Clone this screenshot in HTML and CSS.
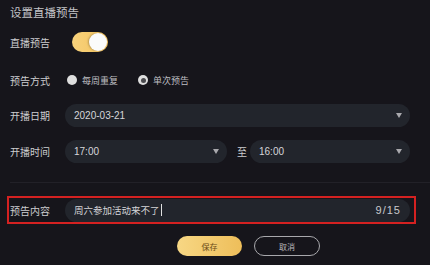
FILE: index.html
```html
<!DOCTYPE html>
<html lang="zh-CN">
<head>
    <meta charset="UTF-8">
    <title>设置直播预告</title>
    <link rel="stylesheet" href="styles.css">
</head>
<body>
    <div class="panel">
        <div class="title">设置直播预告</div>

        <div class="row row-toggle">
            <span class="label">直播预告</span>
            <div class="switch on"><span class="knob"></span></div>
        </div>

        <div class="row row-radio">
            <span class="label">预告方式</span>
            <span class="radio"></span>
            <span class="radio-text">每周重复</span>
            <span class="radio checked"></span>
            <span class="radio-text">单次预告</span>
        </div>

        <div class="row row-date">
            <span class="label">开播日期</span>
            <div class="select wide">
                <span>2020-03-21</span>
                <span class="arrow"></span>
            </div>
        </div>

        <div class="row row-time">
            <span class="label">开播时间</span>
            <div class="select short">
                <span>17:00</span>
                <span class="arrow"></span>
            </div>
            <span class="to">至</span>
            <div class="select wide">
                <span>16:00</span>
                <span class="arrow"></span>
            </div>
        </div>

        <div class="divider"></div>

        <div class="content-box">
            <span class="label">预告内容</span>
            <div class="input">
                <span class="input-text">周六参加活动来不了<span class="caret"></span></span>
                <span class="count">9/15</span>
            </div>
        </div>

        <div class="actions">
            <button class="btn btn-save">保存</button>
            <button class="btn btn-cancel">取消</button>
        </div>
    </div>
</body>
</html>
```

FILE: styles.css
```css
* {
    margin: 0;
    padding: 0;
    box-sizing: border-box;
}

body {
    font-family: "Noto Sans CJK SC", "Noto Sans", sans-serif;
    background: #16151b;
    color: #d2d2d4;
    width: 430px;
    height: 265px;
    overflow: hidden;
}

.title {
    height: 24px;
    line-height: 24px;
    padding-left: 10px;
    font-size: 11.5px;
    color: #c4c4c7;
}

.row {
    display: flex;
    align-items: center;
    padding: 0 20px 0 10px;
}

.label {
    width: 55px;
    flex-shrink: 0;
    font-size: 10px;
    color: #cdcdd0;
}

.row-toggle {
    margin-top: 8px;
    height: 20px;
}

.switch {
    width: 36px;
    height: 20px;
    margin-left: 7px;
    border-radius: 10px;
    background: linear-gradient(90deg, #f8d27b 0%, #f3c25f 100%);
    position: relative;
}

.switch .knob {
    position: absolute;
    top: 1px;
    right: 1px;
    width: 18px;
    height: 18px;
    border-radius: 50%;
    background: #fbfbfb;
    box-shadow: -1px 0 2px rgba(0, 0, 0, 0.25);
}

.row-radio {
    margin-top: 18px;
    height: 20px;
}

.radio {
    width: 10px;
    height: 10px;
    margin-left: 2px;
    border-radius: 50%;
    background: #dedede;
    position: relative;
}

.radio.checked {
    margin-left: 20px;
}

.radio.checked::after {
    content: "";
    position: absolute;
    left: 2.5px;
    top: 2.5px;
    width: 5px;
    height: 5px;
    border-radius: 50%;
    background: #4a4a4e;
}

.radio-text {
    margin-left: 5px;
    font-size: 9px;
    color: #bdbdc0;
}

.row-date {
    margin-top: 14px;
    height: 23px;
}

.row-time {
    margin-top: 13px;
    height: 23px;
}

.select {
    height: 23px;
    border-radius: 12px;
    background: #22252c;
    display: flex;
    align-items: center;
    justify-content: space-between;
    padding: 0 8px 0 9px;
    font-family: "Liberation Sans", sans-serif;
    font-size: 10px;
    color: #d6d6d9;
}

.select.wide {
    flex: 1;
}

.select.short {
    width: 162px;
}

.arrow {
    width: 0;
    height: 0;
    border-left: 3.5px solid transparent;
    border-right: 3.5px solid transparent;
    border-top: 5px solid #a9a9ad;
}

.to {
    margin: 0 3px 0 10px;
    font-size: 10px;
    color: #cdcdd0;
}

.divider {
    margin: 19px 0 0 10px;
    height: 1px;
    background: #222128;
}

.content-box {
    margin: 13px 0 0 7px;
    width: 409px;
    height: 28px;
    border: 2px solid #d42121;
    display: flex;
    align-items: center;
    padding: 0 4px 0 1px;
}

.input {
    flex: 1;
    height: 23px;
    border-radius: 12px;
    background: #22252c;
    display: flex;
    align-items: center;
    justify-content: space-between;
    padding: 0 9px;
}

.input-text {
    font-size: 9.5px;
    color: #d4d4d7;
    display: flex;
    align-items: center;
}

.caret {
    display: inline-block;
    width: 1px;
    height: 12px;
    margin-left: 1px;
    background: #e0e0e0;
}

.count {
    font-family: "Liberation Sans", sans-serif;
    font-size: 11px;
    letter-spacing: 1px;
    color: #c9c9cc;
}

.actions {
    display: flex;
    gap: 12px;
    margin-top: 12px;
    padding-left: 177px;
}

.btn {
    height: 20px;
    border-radius: 10px;
    font-family: "Noto Sans CJK SC", sans-serif;
    font-size: 8px;
    cursor: pointer;
}

.btn-save {
    width: 65px;
    border: none;
    background: linear-gradient(90deg, #f7d784 0%, #eebe5a 100%);
    color: #6a4a16;
}

.btn-cancel {
    width: 66px;
    border: 1px solid #a8a8ac;
    background: transparent;
    color: #b8b8bb;
}
```
